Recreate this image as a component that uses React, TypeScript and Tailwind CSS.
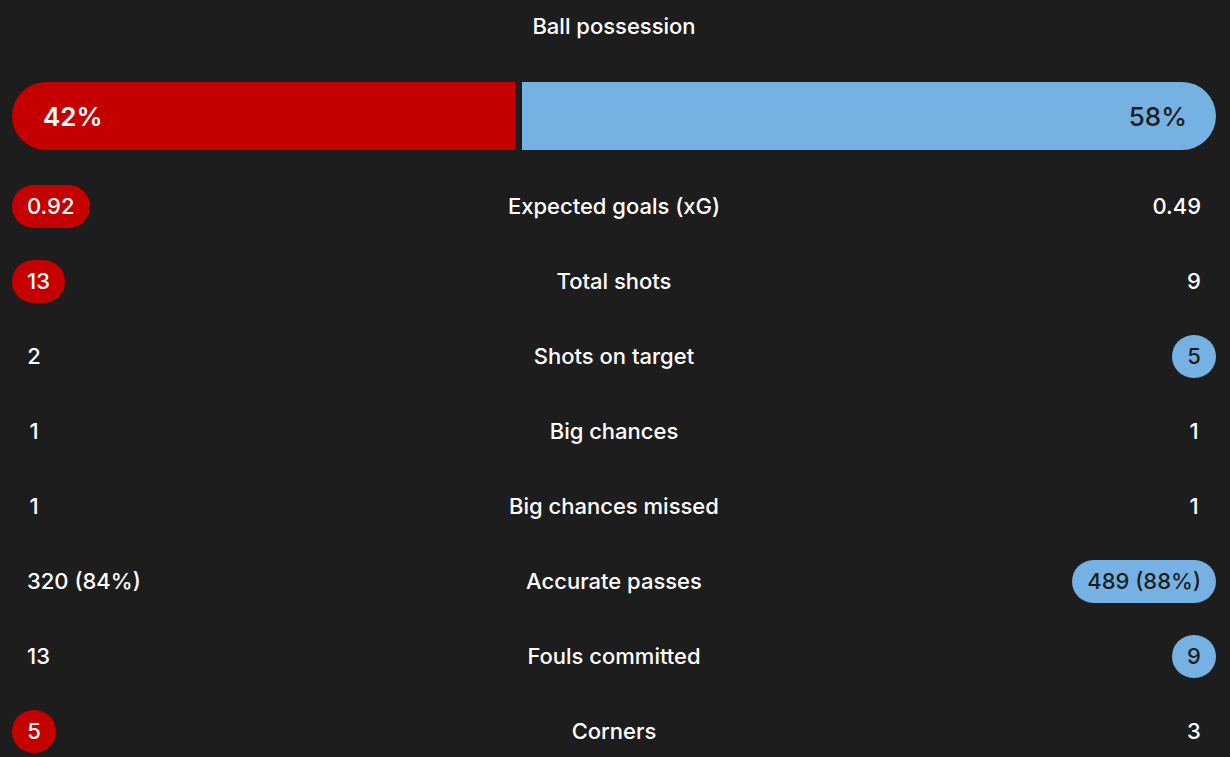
import React from "react";

type Side = "home" | "away" | null;
const rows: { label: string; home: string; away: string; hl: Side }[] = [
  { label: "Expected goals (xG)", home: "0.92", away: "0.49", hl: "home" },
  { label: "Total shots", home: "13", away: "9", hl: "home" },
  { label: "Shots on target", home: "2", away: "5", hl: "away" },
  { label: "Big chances", home: "1", away: "1", hl: null },
  { label: "Big chances missed", home: "1", away: "1", hl: null },
  { label: "Accurate passes", home: "320 (84%)", away: "489 (88%)", hl: "away" },
  { label: "Fouls committed", home: "13", away: "9", hl: "away" },
  { label: "Corners", home: "5", away: "3", hl: "home" },
];

function Val({ v, active, side }: { v: string; active: boolean; side: "home" | "away" }) {
  const base = "h-[43px] min-w-[44px] px-[15px] rounded-full flex items-center justify-center whitespace-nowrap";
  if (!active) return <div className={base + " text-white"}>{v}</div>;
  return (
    <div className={base + (side === "home" ? " bg-[#c40000] text-white" : " bg-[#75b2e3] text-[#1d1d1d]")}>{v}</div>
  );
}

export default function App() {
  return (
    <div
      className="w-[1230px] h-[757px] bg-[#1d1d1d] text-white pl-[12px] pr-[14px] overflow-hidden"
      style={{ fontFamily: "Inter, 'Noto Sans', sans-serif" }}
    >
      <div className="h-[52px] flex items-center justify-center text-[22px] font-medium">Ball possession</div>
      <div className="mt-[30px] h-[68px] flex gap-[7px]">
        <div className="w-[503px] bg-[#c40000] rounded-l-full flex items-center pl-[31px] text-[26px] font-semibold text-white">42%</div>
        <div className="flex-1 bg-[#75b2e3] rounded-r-full flex items-center justify-end pr-[29px] text-[26px] font-medium text-[#1d1d1d]">58%</div>
      </div>
      <div className="mt-[19px]">
        {rows.map((r) => (
          <div key={r.label} className="h-[75px] grid grid-cols-[1fr_auto_1fr] items-center text-[22px] font-medium">
            <div className="flex justify-start">
              <Val v={r.home} active={r.hl === "home"} side="home" />
            </div>
            <div className="text-center">{r.label}</div>
            <div className="flex justify-end">
              <Val v={r.away} active={r.hl === "away"} side="away" />
            </div>
          </div>
        ))}
      </div>
    </div>
  );
}
